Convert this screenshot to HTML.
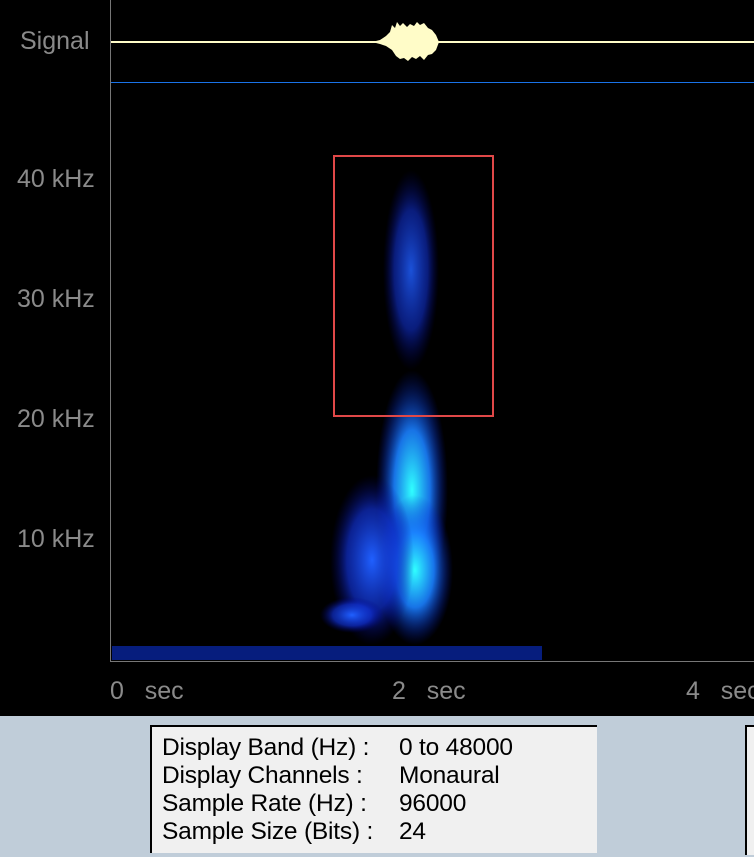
<!DOCTYPE html>
<html><head><style>
body{margin:0;width:754px;height:857px;background:#c0cdd9;position:relative;overflow:hidden;font-family:"Liberation Sans",sans-serif}
.top{position:absolute;left:0;top:0;width:754px;height:716px;background:#000}
.lbl{position:absolute;color:#8a8a8a;font-size:25px}
.box{position:absolute;left:150px;top:725px;width:447px;height:128px;background:#f0f0f0;border-top:2px solid #000;border-left:2px solid #000;font-size:24.5px;color:#000;line-height:28px;padding:7px 0 0 10px;box-sizing:border-box;letter-spacing:-0.2px;white-space:nowrap}
.box span{display:inline-block;width:237px}
</style></head><body>
<div class="top">
<div class="lbl" style="left:20px;top:27px">Signal</div>
<div class="lbl" style="left:17px;top:165px">40 kHz</div>
<div class="lbl" style="left:17px;top:285px">30 kHz</div>
<div class="lbl" style="left:17px;top:405px">20 kHz</div>
<div class="lbl" style="left:17px;top:525px">10 kHz</div>
<div class="lbl" style="left:110px;top:677px">0&nbsp;&nbsp;&nbsp;sec</div>
<div class="lbl" style="left:392px;top:677px">2&nbsp;&nbsp;&nbsp;sec</div>
<div class="lbl" style="left:686px;top:677px">4&nbsp;&nbsp;&nbsp;sec</div>
<div style="position:absolute;left:110px;top:0;width:1px;height:662px;background:#777"></div>
<div style="position:absolute;left:110px;top:661px;width:644px;height:1px;background:#777"></div>
<div style="position:absolute;left:111px;top:41px;width:643px;height:2px;background:#fffcc8"></div>
<div style="position:absolute;left:111px;top:82px;width:643px;height:1px;background:#1a73e8"></div>
<svg width="754" height="716" style="position:absolute;left:0;top:0">
<defs>
<radialGradient id="g1"><stop offset="0" stop-color="#30ffff"/><stop offset="0.5" stop-color="#1a80ff" stop-opacity=".9"/><stop offset="1" stop-color="#0010c0" stop-opacity="0"/></radialGradient>
<radialGradient id="g2"><stop offset="0" stop-color="#2060ff"/><stop offset="0.6" stop-color="#1030d0" stop-opacity=".7"/><stop offset="1" stop-color="#000080" stop-opacity="0"/></radialGradient>
</defs>
<path d="M372 42 L380 40 L386 36 L390 32 L392 25 L395 28 L397 22 L400 26 L403 23 L407 27 L410 24 L414 26 L417 22 L420 25 L424 23 L428 28 L432 30 L436 35 L439 42 L436 50 L432 54 L428 55 L424 60 L420 56 L416 59 L412 57 L408 61 L404 58 L400 59 L396 56 L392 50 L386 46 L380 44 Z" fill="#fffcc8"/>
<ellipse cx="411" cy="270" rx="28" ry="100" fill="url(#g2)" opacity=".85"/>
<ellipse cx="412" cy="490" rx="36" ry="120" fill="url(#g1)"/>
<ellipse cx="415" cy="570" rx="38" ry="75" fill="url(#g1)"/>
<ellipse cx="372" cy="560" rx="42" ry="85" fill="url(#g2)"/>
<ellipse cx="352" cy="615" rx="32" ry="18" fill="url(#g2)"/>
<rect x="112" y="646" width="430" height="14" fill="#0a30d0" opacity=".6"/>
<rect x="334" y="156" width="159" height="260" fill="none" stroke="#e04848" stroke-width="2"/>
</svg>
</div>
<div class="box"><span>Display Band (Hz) :</span>0 to 48000<br><span>Display Channels :</span>Monaural<br><span>Sample Rate (Hz) :</span>96000<br><span>Sample Size (Bits) :</span>24</div>
<div style="position:absolute;left:745px;top:725px;width:9px;height:128px;background:#f0f0f0;border-top:2px solid #000;border-left:2px solid #000"></div>
</body></html>
